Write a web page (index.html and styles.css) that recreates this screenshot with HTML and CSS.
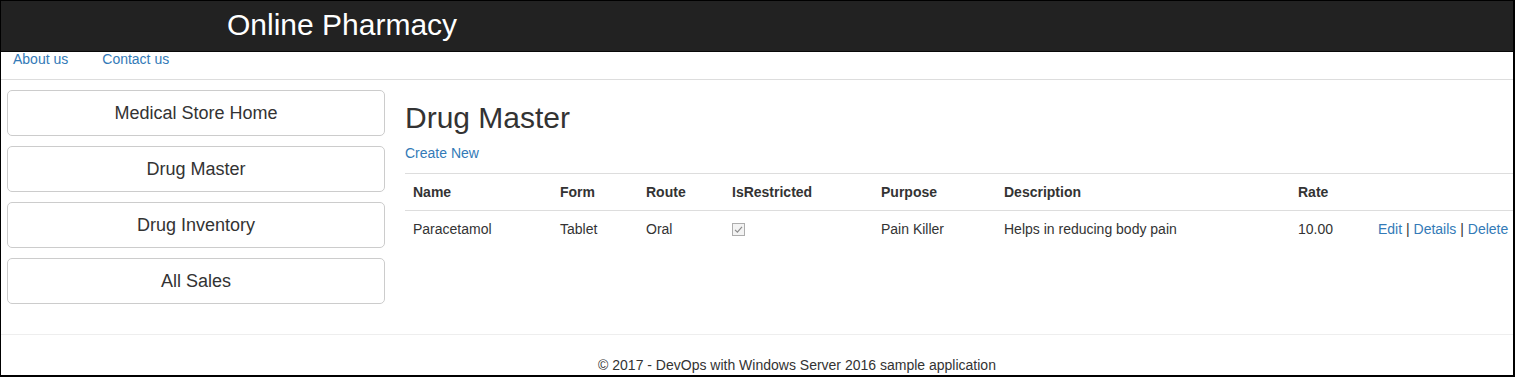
FILE: index.html
```html
<!DOCTYPE html>
<html>
<head>
<meta charset="utf-8">
<title>Drug Master - Online Pharmacy</title>
<link rel="stylesheet" href="styles.css">
</head>
<body>
<div class="frame">
  <header class="topbar">
    <span class="brand">Online Pharmacy</span>
  </header>
  <nav class="links">
    <a href="#">About us</a>
    <a href="#">Contact us</a>
  </nav>
  <main class="main">
    <aside class="sidebar">
      <a class="side-btn" href="#">Medical Store Home</a>
      <a class="side-btn" href="#">Drug Master</a>
      <a class="side-btn" href="#">Drug Inventory</a>
      <a class="side-btn" href="#">All Sales</a>
    </aside>
    <section class="content">
      <h2 class="title">Drug Master</h2>
      <p class="create"><a href="#">Create New</a></p>
      <table class="table">
        <colgroup>
          <col class="c-name"><col class="c-form"><col class="c-route"><col class="c-restr">
          <col class="c-purpose"><col class="c-desc"><col class="c-rate"><col class="c-act">
        </colgroup>
        <tr>
          <th>Name</th><th>Form</th><th>Route</th><th>IsRestricted</th>
          <th>Purpose</th><th>Description</th><th>Rate</th><th></th>
        </tr>
        <tr>
          <td>Paracetamol</td>
          <td>Tablet</td>
          <td>Oral</td>
          <td><svg class="check" width="13" height="13" viewBox="0 0 13 13"><rect x="0.5" y="0.5" width="12" height="12" fill="#f3f3f3" stroke="#adadad"/><path d="M3 6.8 L5.4 9.2 L10 3.8" fill="none" stroke="#8c8c8c" stroke-width="1.2"/></svg></td>
          <td>Pain Killer</td>
          <td>Helps in reducing body pain</td>
          <td>10.00</td>
          <td class="actions"><a href="#">Edit</a> | <a href="#">Details</a> | <a href="#">Delete</a></td>
        </tr>
      </table>
    </section>
  </main>
  <footer class="footer">
    <p>© 2017 - DevOps with Windows Server 2016 sample application</p>
  </footer>
</div>
</body>
</html>
```
FILE: styles.css
```css
* { box-sizing: border-box; }
html, body { margin: 0; padding: 0; background: #fff; }
body { font-family: "Liberation Sans", Arial, sans-serif; font-size: 14px; color: #333; }
a { color: #337ab7; text-decoration: none; }

.frame {
  width: 1515px;
  height: 377px;
  border-style: solid;
  border-color: #000;
  border-width: 1px 2px 2px 1px;
  overflow: hidden;
  display: flex;
  flex-direction: column;
}

.topbar {
  height: 51px;
  flex: none;
  background: #222;
  border-bottom: 1px solid #080808;
  padding-left: 226px;
}
.brand {
  display: block;
  color: #fff;
  font-size: 30px;
  line-height: 50px;
  position: relative;
  top: -1px;
}

.links {
  height: 28px;
  flex: none;
  border-bottom: 1px solid #ddd;
  padding-left: 12px;
  display: flex;
  gap: 34px;
}
.links a { line-height: 14px; font-size: 14px; }

.main {
  height: 254px;
  flex: none;
  display: flex;
}
.sidebar {
  width: 384px;
  flex: none;
  padding: 10px 0 0 6px;
  display: flex;
  flex-direction: column;
  gap: 10px;
}
.side-btn {
  height: 46px;
  border: 1px solid #ccc;
  border-radius: 5px;
  display: flex;
  align-items: center;
  justify-content: center;
  font-size: 18px;
  color: #333;
  padding-top: 1px;
}

.content {
  flex: 1;
  min-width: 0;
  padding-left: 20px;
}
.title {
  font-size: 30px;
  font-weight: 500;
  line-height: 33px;
  margin: 21px 0 9px;
  color: #333;
}
.create { margin: 0 0 10px; line-height: 20px; }

.table {
  width: 1120px;
  table-layout: fixed;
  border-collapse: collapse;
  border-spacing: 0;
}
.table th, .table td {
  padding: 8px;
  line-height: 20px;
  text-align: left;
  vertical-align: top;
  border-top: 1px solid #ddd;
  white-space: nowrap;
}
.table th { font-weight: bold; }
.c-name { width: 147px; }
.c-form { width: 86px; }
.c-route { width: 86px; }
.c-restr { width: 149px; }
.c-purpose { width: 123px; }
.c-desc { width: 294px; }
.c-rate { width: 80px; }
.c-act { width: 155px; }
.check { display: block; margin-top: 4px; }

.footer {
  flex: none;
  height: 40px;
  border-top: 1px solid #eee;
  padding: 21px 0 0 80px;
  text-align: center;
}
.footer p { margin: 0; line-height: 18px; }
```
